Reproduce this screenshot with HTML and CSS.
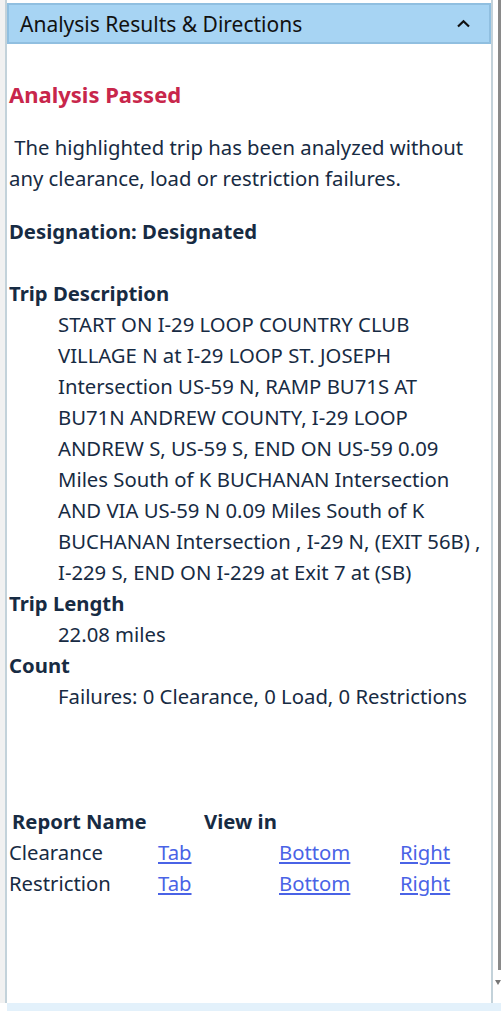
FILE: index.html
```html
<!DOCTYPE html>
<html>
<head>
<meta charset="utf-8">
<link rel="stylesheet" href="styles.css">
</head>
<body>
<div class="page">
  <div class="gutter"></div>
  <div class="panel">
    <div class="header">
      <span class="title">Analysis Results &amp; Directions</span>
      <svg class="chev" width="13" height="9" viewBox="0 0 13 9"><path d="M1 7.5 L6.5 2.2 L12 7.5" fill="none" stroke="#111" stroke-width="2.2"/></svg>
    </div>
    <div class="content">
      <h2 class="status">Analysis Passed</h2>
      <p class="summary">&nbsp;The highlighted trip has been analyzed without<br>any clearance, load or restriction failures.</p>
      <div class="bold designation">Designation: Designated</div>
      <div class="section">
        <div class="bold">Trip Description</div>
        <div class="indent">START ON I-29 LOOP COUNTRY CLUB<br>VILLAGE N at I-29 LOOP ST. JOSEPH<br>Intersection US-59 N, RAMP BU71S AT<br>BU71N ANDREW COUNTY, I-29 LOOP<br>ANDREW S, US-59 S, END ON US-59 0.09<br>Miles South of K BUCHANAN Intersection<br>AND VIA US-59 N 0.09 Miles South of K<br>BUCHANAN Intersection , I-29 N, (EXIT 56B) ,<br>I-229 S, END ON I-229 at Exit 7 at (SB)</div>
        <div class="bold">Trip Length</div>
        <div class="indent">22.08 miles</div>
        <div class="bold">Count</div>
        <div class="indent">Failures: 0 Clearance, 0 Load, 0 Restrictions</div>
      </div>
      <div class="reports">
        <div class="rhead name">Report Name</div>
        <div class="rhead view">View in</div>
        <div class="rname">Clearance</div>
        <a class="rlink" href="#">Tab</a>
        <a class="rlink" href="#">Bottom</a>
        <a class="rlink" href="#">Right</a>
        <div class="rname">Restriction</div>
        <a class="rlink" href="#">Tab</a>
        <a class="rlink" href="#">Bottom</a>
        <a class="rlink" href="#">Right</a>
      </div>
    </div>
  </div>
  <div class="scroll">
    <div class="thumb"></div>
    <div class="arrow"></div>
  </div>
</div>
<div class="footer"></div>
</body>
</html>
```
FILE: styles.css
```css
html, body {
  margin: 0;
  padding: 0;
  background: #ffffff;
  width: 501px;
  height: 1011px;
  overflow: hidden;
}
body {
  font-family: "Noto Sans", "Open Sans", sans-serif;
  color: #172b43;
}
.page {
  display: flex;
  height: 1003px;
}
.gutter {
  width: 5px;
  background: #f1f1f1;
}
.panel {
  width: 484px;
  border-left: 2px solid #c3d2da;
  border-right: 2px solid #c3d2da;
  background: #fff;
  padding-top: 3px;
}
.header {
  height: 37px;
  background: #a7d4f3;
  border: 2px solid #90bfe0;
  display: flex;
  align-items: center;
  justify-content: space-between;
  padding: 0 19px 0 11px;
}
.title {
  font-size: 21px;
  color: #111;
}
.chev { display: block; }
.content {
  padding: 35px 0 0 2px;
  font-size: 20.3px;
  line-height: 31px;
  white-space: nowrap;
}
.status {
  margin: 0;
  font-size: 22px;
  line-height: 30px;
  color: #c8264b;
  font-weight: 700;
}
.summary {
  margin: 23px 0 0 0;
}
.bold { font-weight: 700; }
.designation { margin-top: 22px; }
.section { margin-top: 31px; }
.indent { padding-left: 49px; }
.reports {
  margin-top: 94px;
  display: grid;
  grid-template-columns: 149px 121px 121px auto;
}
.rhead { font-weight: 700; padding-left: 3px; }
.rhead.view { grid-column: 2 / 5; padding-left: 46px; }
.rlink { color: #4a63e6; text-decoration: underline; }
.scroll {
  width: 8px;
  position: relative;
  background: #fff;
}
.thumb {
  position: absolute;
  right: 0;
  top: 0;
  width: 3px;
  height: 970px;
  background: #8a8a8a;
}
.arrow {
  position: absolute;
  right: 0;
  top: 980px;
  width: 0;
  height: 0;
  border-left: 3px solid transparent;
  border-right: 3px solid transparent;
  border-top: 5px solid #777;
}
.footer {
  margin-left: 7px;
  height: 8px;
  background: #e3f1fb;
}
```
